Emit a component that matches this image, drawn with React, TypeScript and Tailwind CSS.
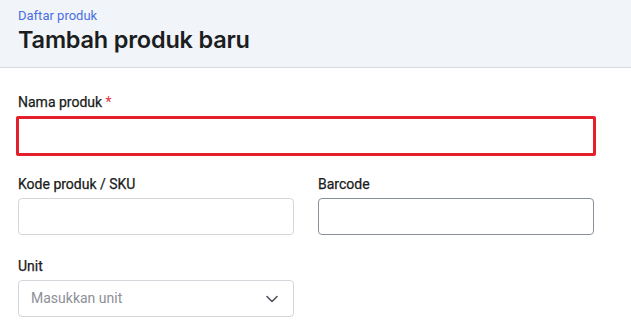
import React from 'react';

const Label: React.FC<{ children: React.ReactNode }> = ({ children }) => (
    <label className="block text-[14px] leading-[20px] font-normal text-[#1a1c20] mb-[4px] [-webkit-text-stroke:0.25px_#1a1c20]">{children}</label>
);

const App: React.FC = () => {
    return (
        <div className="w-[631px] h-[331px] bg-white font-['Roboto',sans-serif] overflow-hidden">
            <div className="h-[68px] bg-[#f1f4f9] border-b border-[#d5dbe5] px-[18px] pt-[6px]">
                <a className="block text-[13px] leading-[19px] text-[#4a6fe0]">Daftar produk</a>
                <h1 className="text-[23.5px] leading-[30px] font-semibold text-[#1b1d21] font-['Inter',sans-serif] tracking-[-0.2px]">
                    Tambah produk baru
                </h1>
            </div>
            <div className="px-[18px] pt-[24px]">
                <Label>
                    Nama produk <span className="text-[#e0323c] [-webkit-text-stroke:0]">*</span>
                </Label>
                <input className="block w-[580px] h-[40px] -ml-[2px] border-[3px] border-[#e21f2b] rounded-[2px] outline-none" />
                <div className="grid grid-cols-[276px_276px] gap-x-[24px] mt-[18px]">
                    <div>
                        <Label>Kode produk / SKU</Label>
                        <input className="block w-full h-[37px] border border-[#d3d7dc] rounded-[4px] outline-none" />
                    </div>
                    <div>
                        <Label>Barcode</Label>
                        <input className="block w-full h-[37px] border border-[#8a9099] rounded-[4px] outline-none" />
                    </div>
                </div>
                <div className="w-[276px] mt-[21px]">
                    <Label>Unit</Label>
                    <div className="flex items-center justify-between h-[37px] border border-[#d3d7dc] rounded-[4px] pl-[12px] pr-[15px]">
                        <span className="text-[14px] text-[#8c9096]">Masukkan unit</span>
                        <svg width="12" height="8" viewBox="0 0 12 8" fill="none">
                            <path d="M1 1.5L6 6.5L11 1.5" stroke="#50555c" strokeWidth="1.6" strokeLinecap="round" strokeLinejoin="round" />
                        </svg>
                    </div>
                </div>
            </div>
        </div>
    );
};

export default App;
